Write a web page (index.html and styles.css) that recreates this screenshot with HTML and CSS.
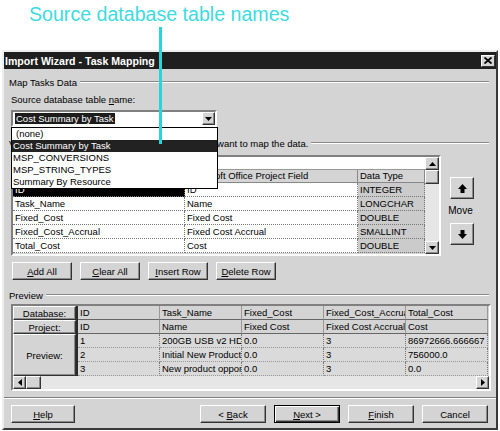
FILE: index.html
```html
<!DOCTYPE html>
<html lang="en">
<head>
  <meta charset="UTF-8">
  <title>Import Wizard - Task Mapping</title>
  <link rel="stylesheet" href="styles.css">
</head>
<body>

  <div class="callout">Source database table names</div>
  <div class="pointer"></div>

  <div class="dialog">
    <div class="titlebar">
      <span>Import Wizard - Task Mapping</span>
      <span class="close-btn"><svg width="8" height="7" viewBox="0 0 8 7"><path d="M0.5 0.5l7 6M7.5 0.5l-7 6" stroke="#000" stroke-width="1.8"/></svg></span>
    </div>

    <div class="content">
      <div class="group-head first"><span>Map Tasks Data</span><i class="etch"></i></div>
      <div class="field-label">Source database table <u>n</u>ame:</div>

      <div class="combo">
        <span class="combo-sel">Cost Summary by Task</span>
        <span class="combo-btn"><svg width="7" height="4"><path d="M0 0h7L3.5 4z"/></svg></span>
        <ul class="combo-list">
          <li class="none">(none)</li>
          <li class="active">Cost Summary by Task</li>
          <li>MSP_CONVERSIONS</li>
          <li>MSP_STRING_TYPES</li>
          <li>Summary By Resource</li>
        </ul>
      </div>

      <div class="group-head verify"><span>Verify or edit the source field in the table that you want to map the data.</span><i class="etch"></i></div>

      <div class="mapping">
        <div class="map-grid">
          <div class="map-cells">
            <div class="edit-row"></div>
            <div class="map-row head"><div>Source Database Field</div><div>Microsoft Office Project Field</div><div>Data Type</div></div>
            <div class="map-row"><div class="sel">ID</div><div>ID</div><div>INTEGER</div></div>
            <div class="map-row"><div>Task_Name</div><div>Name</div><div>LONGCHAR</div></div>
            <div class="map-row"><div>Fixed_Cost</div><div>Fixed Cost</div><div>DOUBLE</div></div>
            <div class="map-row"><div>Fixed_Cost_Accrual</div><div>Fixed Cost Accrual</div><div>SMALLINT</div></div>
            <div class="map-row"><div>Total_Cost</div><div>Cost</div><div>DOUBLE</div></div>
          </div>
          <div class="vscroll">
            <span class="sb-btn"><svg width="7" height="4"><path d="M0 4h7L3.5 0z"/></svg></span>
            <span class="sb-thumb"></span>
            <span class="sb-track"></span>
            <span class="sb-btn"><svg width="7" height="4"><path d="M0 0h7L3.5 4z"/></svg></span>
          </div>
        </div>
        <div class="move">
          <span class="move-btn up"><svg width="9" height="9"><path d="M4.5 0L9 5H6.5V9h-4V5H0z"/></svg></span>
          <span class="move-label">Move</span>
          <span class="move-btn"><svg width="9" height="9"><path d="M4.5 9L9 4H6.5V0h-4V4H0z"/></svg></span>
        </div>
      </div>

      <div class="btn-row">
        <span class="btn"><span><u>A</u>dd All</span></span>
        <span class="btn"><span><u>C</u>lear All</span></span>
        <span class="btn"><span><u>I</u>nsert Row</span></span>
        <span class="btn"><span><u>D</u>elete Row</span></span>
      </div>

      <div class="group-head preview-head"><span>Preview</span><i class="etch"></i></div>

      <div class="preview">
        <div class="pv-grid">
          <div class="pv-h">Database:</div>
          <div class="pv-div"></div>
          <div class="pv-c top">ID</div>
          <div class="pv-c top">Task_Name</div>
          <div class="pv-c top">Fixed_Cost</div>
          <div class="pv-c top">Fixed_Cost_Accrual</div>
          <div class="pv-c top">Total_Cost</div>

          <div class="pv-h">Project:</div>
          <div class="pv-c top">ID</div>
          <div class="pv-c top">Name</div>
          <div class="pv-c top">Fixed Cost</div>
          <div class="pv-c top">Fixed Cost Accrual</div>
          <div class="pv-c top">Cost</div>

          <div class="pv-h tall">Preview:</div>
          <div class="pv-c">1</div>
          <div class="pv-c">200GB USB v2 HD</div>
          <div class="pv-c">0.0</div>
          <div class="pv-c">3</div>
          <div class="pv-c">86972666.666667</div>

          <div class="pv-c">2</div>
          <div class="pv-c">Initial New Product</div>
          <div class="pv-c">0.0</div>
          <div class="pv-c">3</div>
          <div class="pv-c">756000.0</div>

          <div class="pv-c">3</div>
          <div class="pv-c">New product opportunity</div>
          <div class="pv-c">0.0</div>
          <div class="pv-c">3</div>
          <div class="pv-c">0.0</div>
        </div>
        <div class="hscroll">
          <span class="sb-btn"><svg width="4" height="7"><path d="M4 0v7L0 3.5z"/></svg></span>
          <span class="sb-thumb"></span>
          <span class="sb-track"></span>
          <span class="sb-btn"><svg width="4" height="7"><path d="M0 0v7L4 3.5z"/></svg></span>
        </div>
      </div>
    </div>

    <div class="separator"></div>

    <div class="footer">
      <span class="btn wide"><span><u>H</u>elp</span></span>
      <div class="nav">
        <span class="btn wide"><span>&lt; <u>B</u>ack</span></span>
        <span class="btn wide default"><span><u>N</u>ext &gt;</span></span>
        <span class="btn wide"><span><u>F</u>inish</span></span>
        <span class="btn wide"><span>Cancel</span></span>
      </div>
    </div>
  </div>

</body>
</html>
```

FILE: styles.css
```css
body {
  margin: 0;
  width: 500px;
  height: 431px;
  overflow: hidden;
  position: relative;
  background: #fff;
  color: #000;
  font-family: "Liberation Sans", Arial, sans-serif;
  font-size: 9.5px;
}
.callout {
  height: 50px;
  padding-left: 29px;
  font-size: 19.6px;
  line-height: 28px;
  color: #3ddbe0;
}
.pointer {
  position: absolute;
  left: 159px;
  top: 27px;
  width: 3px;
  height: 117px;
  background: #2ad4dc;
  z-index: 5;
}
.dialog {
  margin-left: 2px;
  width: 496px;
  height: 380px;
  box-sizing: border-box;
  border: 2px solid;
  border-color: #eee #3a3a3a #3a3a3a #eee;
  background: #d4d4d4;
}
.titlebar {
  height: 17px;
  padding: 0 1px 0 1px;
  display: flex;
  align-items: center;
  justify-content: space-between;
  background: #1f1f1f;
  color: #fff;
  font-size: 10.6px;
  font-weight: bold;
}
.close-btn {
  width: 14px;
  height: 12px;
  box-sizing: border-box;
  display: flex;
  align-items: center;
  justify-content: center;
  background: #d4d4d4;
  border: 1px solid;
  border-color: #fff #333 #333 #fff;
}
.content {
  padding: 0 7px 0 5px;
}

/* group headers with etched line */
.group-head {
  display: flex;
  align-items: center;
  height: 12px;
  white-space: nowrap;
}
.group-head .etch {
  flex: 1;
  margin-left: 3px;
  border-top: 1px solid #8a8a8a;
  border-bottom: 1px solid #fff;
}
.group-head.first { margin-top: 7px; }
.group-head.verify { margin-top: 10px; }
.group-head.preview-head { margin-top: 9px; }

.field-label {
  margin: 6px 0 0 2px;
  height: 12px;
  line-height: 12px;
}

/* combo box */
.combo {
  position: relative;
  margin: 4px 0 0 2px;
  width: 206px;
  height: 17px;
  box-sizing: border-box;
  padding-left: 2px;
  display: flex;
  align-items: center;
  justify-content: space-between;
  border: 2px solid;
  border-color: #808080 #fff #fff #808080;
  background: #fff;
}
.combo-sel {
  padding: 0 1px;
  line-height: 11px;
  background: #1c1c1c;
  color: #fff;
}
.combo-btn, .sb-btn, .sb-thumb, .move-btn, .btn, .pv-h {
  box-sizing: border-box;
  border: 1px solid;
  border-color: #fff #333 #333 #fff;
  box-shadow: inset -1px -1px #8a8a8a;
  background: #d4d4d4;
}
.combo-btn, .sb-btn, .move-btn, .btn {
  display: flex;
  align-items: center;
  justify-content: center;
}
.combo-btn {
  width: 13px;
  height: 13px;
}
.combo-list {
  position: absolute;
  left: -2px;
  top: 15px;
  z-index: 4;
  width: 207px;
  margin: 0;
  padding: 0;
  list-style: none;
  box-sizing: border-box;
  border: 1px solid #000;
  background: #fff;
}
.combo-list li {
  height: 12px;
  line-height: 12px;
  padding-left: 1px;
  white-space: nowrap;
}
.combo-list li.none { padding-left: 4px; }
.combo-list li.active {
  background: #222;
  color: #fff;
}

/* field mapping grid */
.mapping {
  display: flex;
  height: 101px;
  margin: 6px 0 0 2px;
}
.map-grid {
  width: 430px;
  display: flex;
  box-sizing: border-box;
  border: 2px solid;
  border-color: #808080 #fff #fff #808080;
  background: #d4d4d4;
}
.map-cells {
  width: 412px;
  overflow: hidden;
}
.edit-row {
  height: 12px;
  background: #fff;
  border-bottom: 1px solid #999;
}
.map-row {
  display: grid;
  grid-template-columns: 172px 173px 67px;
  height: 14px;
}
.map-row > div {
  padding-left: 2px;
  line-height: 13px;
  white-space: nowrap;
  overflow: hidden;
  background: #fff;
  border-right: 1px dotted #777;
  border-bottom: 1px dotted #777;
}
.map-row > div:nth-child(3) { background: #cbcbcb; }
.map-row.head { height: 13px; }
.map-row.head > div {
  line-height: 12px;
  background: #d4d4d4;
  border-right: 1px solid #888;
  border-bottom: 1px solid #888;
}
.map-row > div.sel {
  background: #000;
  color: #fff;
}
.vscroll {
  width: 14px;
  display: flex;
  flex-direction: column;
  background: #e6e6e6;
}
.sb-btn {
  width: 14px;
  height: 13px;
}
.vscroll .sb-thumb { height: 14px; }
.sb-track { flex: 1; }

.move {
  width: 26px;
  margin-left: 8px;
  display: flex;
  flex-direction: column;
  align-items: center;
}
.move-btn {
  width: 24px;
  height: 22px;
}
.move-btn.up { margin-top: 22px; }
.move-label {
  height: 24px;
  line-height: 24px;
  font-size: 10px;
  margin-right: 3px;
}

.btn-row {
  display: flex;
  gap: 8px;
  margin: 6px 0 0 3px;
}
.btn {
  width: 60px;
  height: 18px;
  white-space: nowrap;
}

/* preview grid */
.preview {
  width: 480px;
  height: 87px;
  margin: 3px 0 0 2px;
  box-sizing: border-box;
  overflow: hidden;
  border: 2px solid;
  border-color: #808080 #fff #fff #808080;
  background: #d4d4d4;
}
.pv-grid {
  display: grid;
  grid-template-columns: 63px 2px repeat(5, 82px);
  grid-template-rows: repeat(5, 14px);
}
.pv-h {
  display: flex;
  align-items: center;
  justify-content: center;
}
.pv-h.tall { grid-row: 3 / 6; }
.pv-div {
  grid-row: 1 / 6;
  grid-column: 2;
  background: #2a2a2a;
}
.pv-c {
  padding-left: 2px;
  line-height: 13px;
  white-space: nowrap;
  overflow: hidden;
  background: #dadada;
  border-right: 1px dotted #777;
  border-bottom: 1px dotted #999;
}
.pv-c.top {
  background: #d4d4d4;
  border-right: 1px solid #999;
  border-bottom: 1px solid #666;
}
.hscroll {
  display: flex;
  height: 13px;
  background: #e6e6e6;
}
.hscroll .sb-btn { width: 13px; }
.hscroll .sb-thumb { width: 15px; }

.separator {
  margin-top: 6px;
  border-top: 1px solid #808080;
  border-bottom: 1px solid #fff;
}
.footer {
  display: flex;
  justify-content: space-between;
  margin-top: 6px;
  padding: 0 8px 0 7px;
}
.nav {
  display: flex;
  gap: 8px;
}
.btn.wide { width: 66px; }
.footer > .btn.wide { width: 64px; }
.btn.default {
  border-color: #000;
  box-shadow: inset 1px 1px #fff, inset -1px -1px #333, inset -2px -2px #8a8a8a;
}
```
